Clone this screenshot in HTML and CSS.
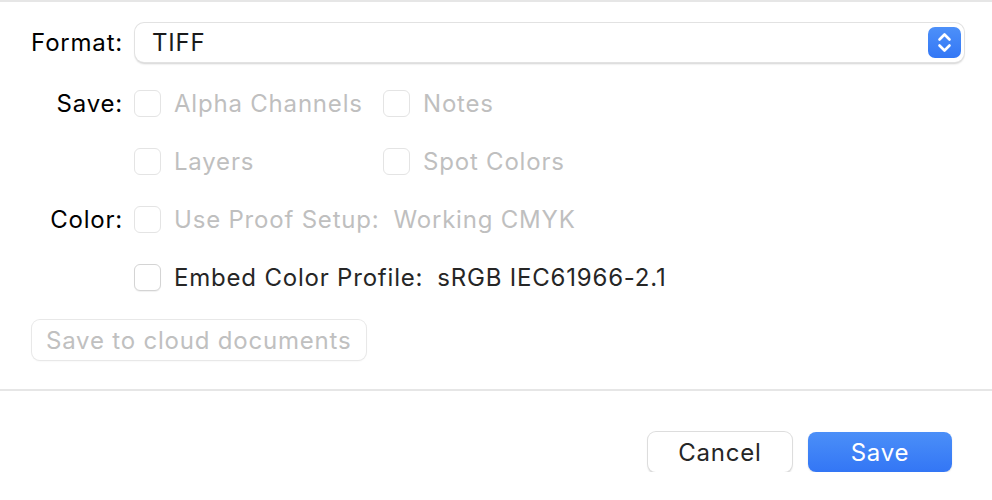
FILE: index.html
```html
<!DOCTYPE html>
<html>
<head>
<meta charset="utf-8">
<link rel="stylesheet" href="styles.css">
</head>
<body>
<div class="top-line"></div>
<div class="form">
  <div class="row format-row">
    <div class="label">Format:</div>
    <div class="popup">
      <span class="popup-text">TIFF</span>
      <span class="stepper">
        <svg width="33" height="31" viewBox="0 0 33 31">
          <path d="M11.5 12.5 L16.5 7.5 L21.5 12.5" fill="none" stroke="#fff" stroke-width="2.6" stroke-linecap="round" stroke-linejoin="round"/>
          <path d="M11.5 18.5 L16.5 23.5 L21.5 18.5" fill="none" stroke="#fff" stroke-width="2.6" stroke-linecap="round" stroke-linejoin="round"/>
        </svg>
      </span>
    </div>
  </div>
  <div class="opts">
    <div class="label">Save:</div>
    <div class="grid2">
      <div class="check disabled"><span class="box"></span><span>Alpha Channels</span></div>
      <div class="check disabled"><span class="box"></span><span>Notes</span></div>
    </div>
    <div class="label"></div>
    <div class="grid2">
      <div class="check disabled"><span class="box"></span><span>Layers</span></div>
      <div class="check disabled"><span class="box"></span><span>Spot Colors</span></div>
    </div>
    <div class="label">Color:</div>
    <div class="check disabled"><span class="box"></span><span>Use Proof Setup:</span><span class="value">Working CMYK</span></div>
    <div class="label"></div>
    <div class="check"><span class="box"></span><span>Embed Color Profile:</span><span class="value">sRGB IEC61966-2.1</span></div>
  </div>
  <div class="cloud-wrap">
    <button class="cloud">Save to cloud documents</button>
  </div>
</div>
<div class="divider"></div>
<div class="footer">
  <button class="btn cancel">Cancel</button>
  <button class="btn primary">Save</button>
</div>
</body>
</html>
```

FILE: styles.css
```css
html, body {
  margin: 0;
  padding: 0;
  background: #ffffff;
  font-family: "Inter", "Liberation Sans", sans-serif;
  font-size: 24px;
  letter-spacing: 0.8px;
  color: #000000;
}

.top-line {
  height: 2px;
  background: #e6e6e6;
}

.form {
  padding-top: 20px;
}

.row {
  display: flex;
  align-items: center;
}

.label {
  width: 123px;
  text-align: right;
  color: #000;
  flex: none;
}

.format-row {
  height: 40px;
  gap: 12px;
  padding-right: 28px;
}

.popup {
  flex: 1;
  height: 39px;
  box-sizing: border-box;
  border-radius: 9px;
  background: #fff;
  box-shadow: 0 0 0 1px #e2e2e2, 0 1.5px 2px rgba(0,0,0,0.18);
  display: flex;
  align-items: center;
  justify-content: space-between;
  padding: 0 3px 0 17px;
  color: #1a1a1a;
}

.stepper {
  width: 33px;
  height: 31px;
  border-radius: 7px;
  background: linear-gradient(#4d90f9, #3377f5);
  display: flex;
}

.opts {
  margin-top: 12px;
  display: grid;
  grid-template-columns: 123px 1fr;
  grid-auto-rows: 58px;
  column-gap: 11px;
  align-items: center;
}

.grid2 {
  display: grid;
  grid-template-columns: 249px auto;
}

.check {
  display: flex;
  align-items: center;
  color: #262626;
}

.check.disabled {
  color: #bfbfbf;
}

.box {
  width: 27px;
  height: 27px;
  box-sizing: border-box;
  border-radius: 6px;
  background: #fff;
  border: 1px solid #d4d4d4;
  box-shadow: 0 1px 1px rgba(0,0,0,0.06);
  margin-right: 13px;
  flex: none;
}

.check.disabled .box {
  border-color: #e4e4e4;
  box-shadow: none;
}

.value {
  margin-left: 14px;
}

.cloud-wrap {
  margin-top: 14px;
  padding-left: 32px;
}

.cloud {
  font-family: inherit;
  font-size: 24px;
  letter-spacing: 0.8px;
  color: #c0c0c0;
  background: #fff;
  border: none;
  height: 40px;
  width: 334px;
  border-radius: 8px;
  box-shadow: 0 0 0 1px #e8e8e8, 0 1px 2px rgba(0,0,0,0.08);
  padding: 0 14px;
  text-align: left;
  margin: 0;
}

.divider {
  margin-top: 29px;
  height: 2px;
  background: #e6e6e6;
}

.footer {
  margin-top: 41px;
  display: flex;
  justify-content: flex-end;
  gap: 16px;
  padding-right: 40px;
}

.btn {
  font-family: inherit;
  font-size: 24px;
  letter-spacing: 0.8px;
  width: 144px;
  height: 40px;
  border: none;
  border-radius: 8px;
  margin: 0;
  padding: 0;
}

.cancel {
  background: #fff;
  color: #262626;
  box-shadow: 0 0 0 1px #dddddd, 0 1.5px 2px rgba(0,0,0,0.2);
}

.primary {
  background: linear-gradient(#4b8ff8, #3376f5);
  color: #fff;
  box-shadow: 0 1px 1.5px rgba(0,0,0,0.15);
}
```
